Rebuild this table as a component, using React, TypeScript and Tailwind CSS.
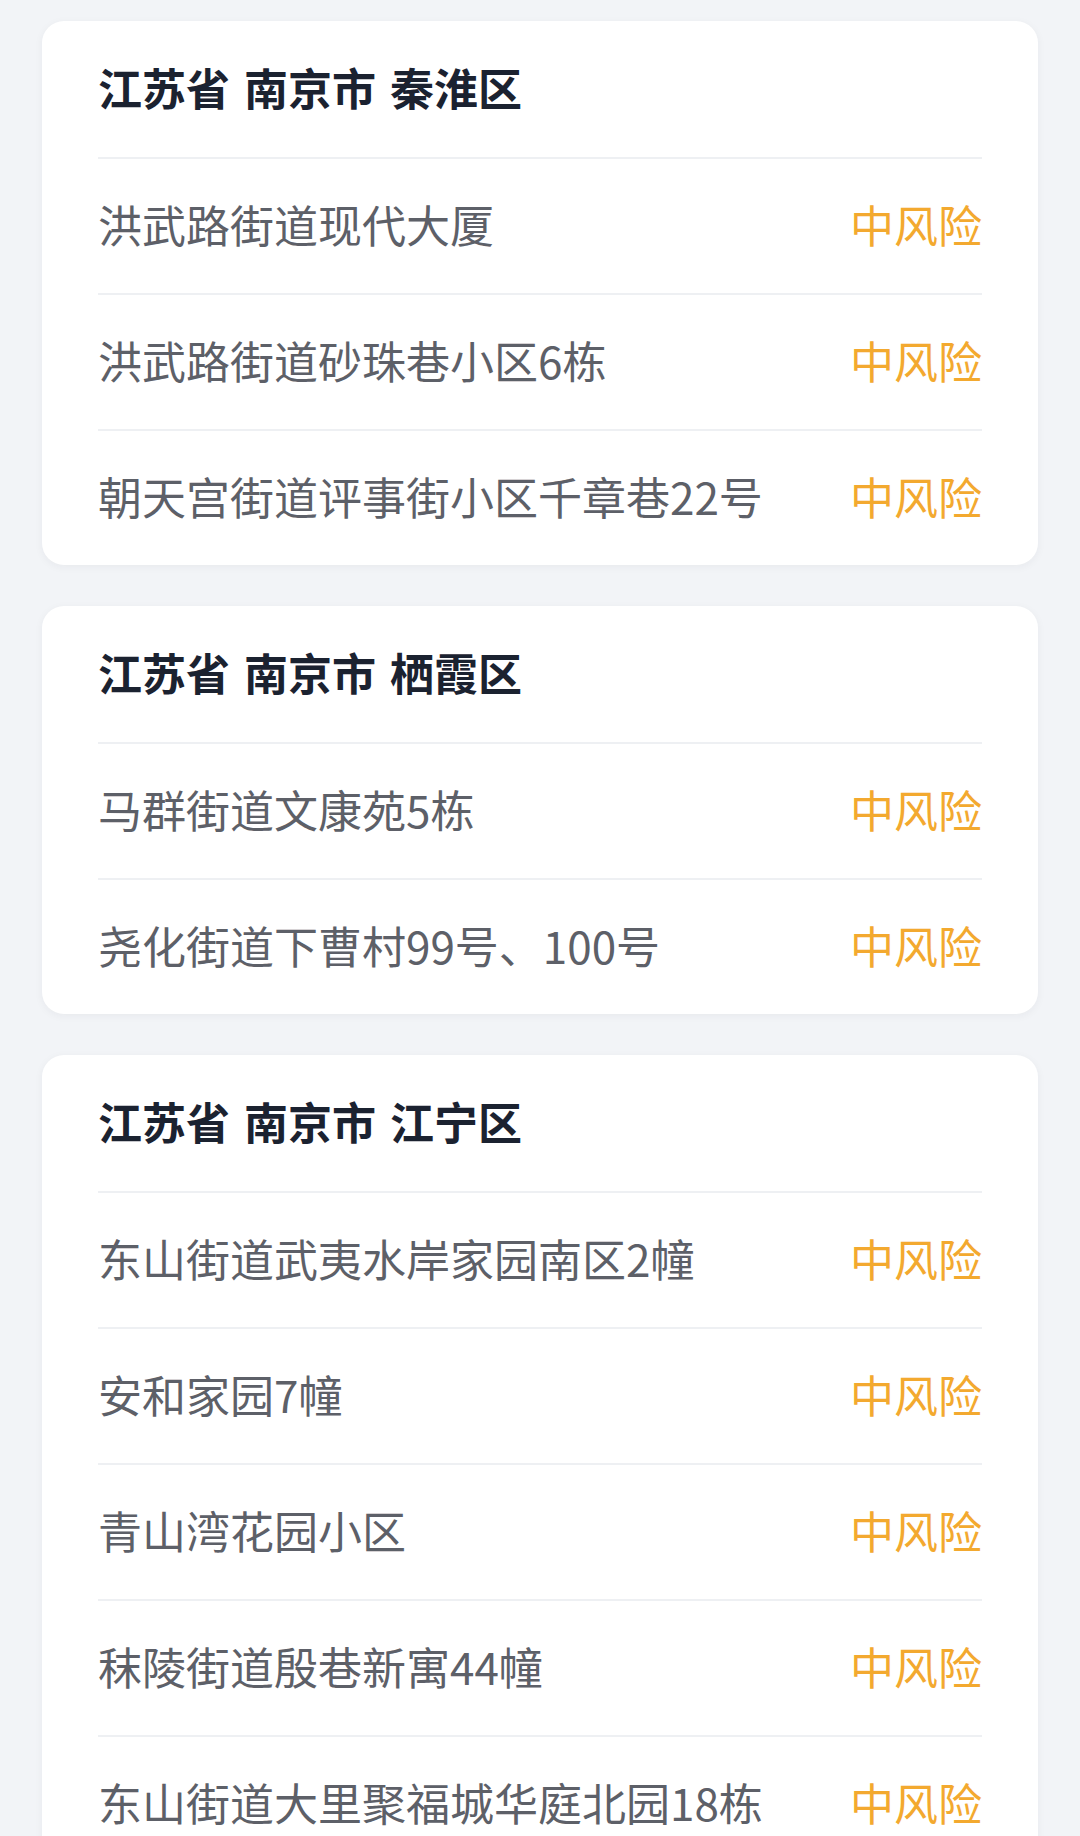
import React from "react";

interface Area {
  title: string;
  places: string[];
}

const areas: Area[] = [
  {
    title: "江苏省 南京市 秦淮区",
    places: ["洪武路街道现代大厦", "洪武路街道砂珠巷小区6栋", "朝天宫街道评事街小区千章巷22号"],
  },
  {
    title: "江苏省 南京市 栖霞区",
    places: ["马群街道文康苑5栋", "尧化街道下曹村99号、100号"],
  },
  {
    title: "江苏省 南京市 江宁区",
    places: [
      "东山街道武夷水岸家园南区2幢",
      "安和家园7幢",
      "青山湾花园小区",
      "秣陵街道殷巷新寓44幢",
      "东山街道大里聚福城华庭北园18栋",
    ],
  },
];

const App: React.FC = () => {
  return (
    <div
      className="min-h-screen bg-[#f2f4f7] px-[42px] pt-[21px] pb-[42px] flex flex-col gap-[41px]"
      style={{ fontFamily: '"Noto Sans CJK SC", "Noto Sans", sans-serif' }}
    >
      {areas.map((area) => (
        <div
          key={area.title}
          className="bg-white rounded-[22px] shadow-[0_2px_8px_rgba(30,40,60,0.05)] px-[56px]"
        >
          {/* 地区标题 */}
          <div className="h-[136px] pb-[5px] flex items-center gap-[14px] text-[44px] font-bold text-[#1b2230] leading-none">
            {area.title.split(" ").map((part) => (
              <span key={part}>{part}</span>
            ))}
          </div>
          {area.places.map((place) => (
            <div
              key={place}
              className="h-[136px] pb-[5px] border-t-2 border-[#eef0f3] flex items-center justify-between text-[44px] leading-none"
            >
              <span className="text-[#5d6068]">{place}</span>
              <span className="text-[#f3a92f]">中风险</span>
            </div>
          ))}
        </div>
      ))}
    </div>
  );
};

export default App;
